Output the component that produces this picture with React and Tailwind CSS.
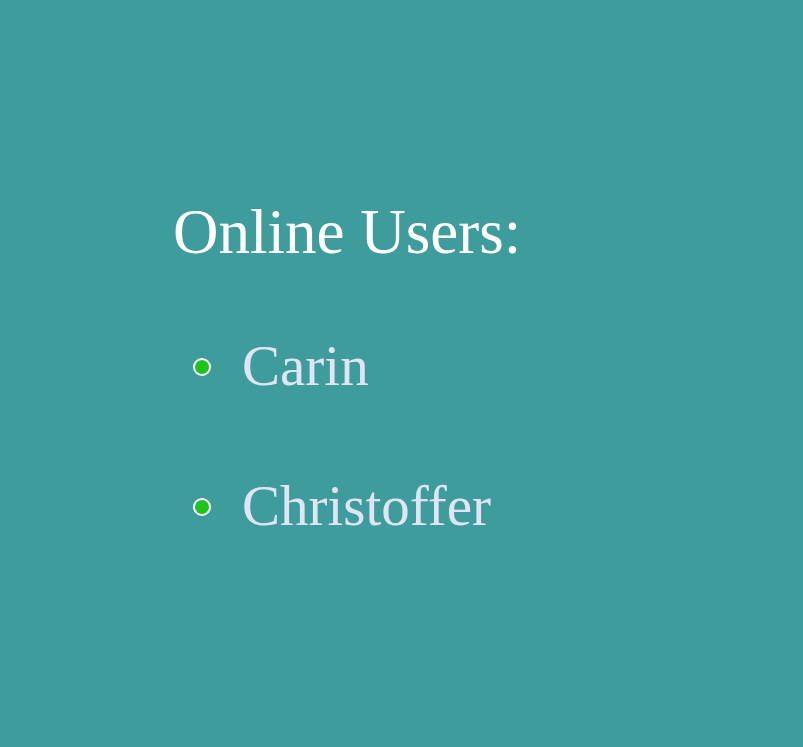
import React from "react";

const users = ["Carin", "Christoffer"];

export default function App() {
  return (
    <div
      className="min-h-[747px] w-full bg-[#3f9c9c] pl-[173px] pt-[197px]"
      style={{ fontFamily: '"Liberation Serif", "Times New Roman", serif' }}
    >
      <h1 className="text-[63px] leading-[70px] text-white">Online Users:</h1>
      <ul className="mt-[68px] flex flex-col gap-[78px] pl-[20px]">
        {users.map((u) => (
          <li key={u} className="flex items-start">
            <span className="mt-[23px] h-[18px] w-[18px] rounded-full border-2 border-white bg-[#1ec31e]" />
            <span className="ml-[31px] text-[57px] leading-[62px] text-[#dfe5f7]">{u}</span>
          </li>
        ))}
      </ul>
    </div>
  );
}
